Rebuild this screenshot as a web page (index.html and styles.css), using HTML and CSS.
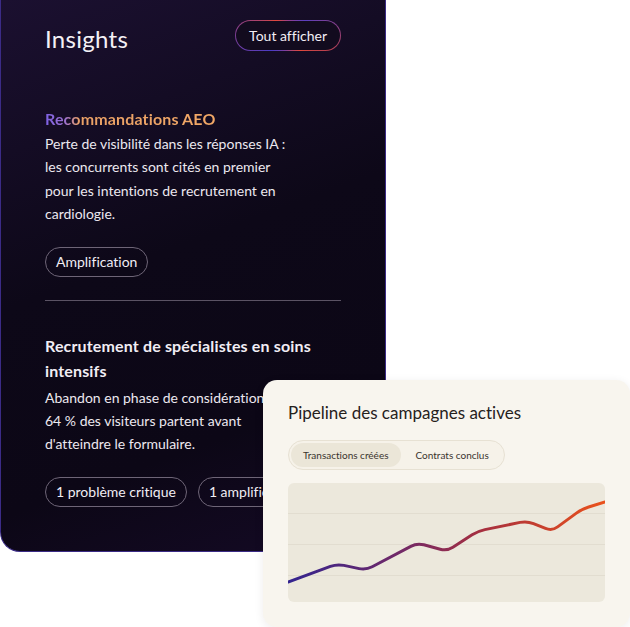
FILE: index.html
```html
<!DOCTYPE html>
<html lang="fr">
<head>
  <meta charset="UTF-8" />
  <title>Insights</title>
  <meta name="viewport" content="width=device-width, initial-scale=1" />
  <link rel="stylesheet" href="styles.css">
</head>
<body>
  <div class="stage">
    <section class="insights">
      <div class="insights-head">
        <h1>Insights</h1>
        <a href="#" class="btn-all">Tout afficher</a>
      </div>

      <div class="insight">
        <h3 class="grad-title">Recommandations AEO</h3>
        <p>Perte de visibilité dans les réponses IA :<br>les concurrents sont cités en premier<br>pour les intentions de recrutement en<br>cardiologie.</p>
        <div class="tags">
          <span class="tag">Amplification</span>
        </div>
      </div>

      <hr class="sep">

      <div class="insight second">
        <h3>Recrutement de spécialistes en soins intensifs</h3>
        <p>Abandon en phase de considération :<br>64 % des visiteurs partent avant<br>d'atteindre le formulaire.</p>
        <div class="tags">
          <span class="tag">1 problème critique</span>
          <span class="tag">1 amplification</span>
        </div>
      </div>
    </section>

    <!-- carte pipeline, posée par-dessus -->
    <section class="pipeline">
      <h2>Pipeline des campagnes actives</h2>
      <div class="tabs">
        <span class="tab active">Transactions créées</span>
        <span class="tab">Contrats conclus</span>
      </div>
      <div class="chart">
        <svg viewBox="0 0 317 119" preserveAspectRatio="none">
          <defs>
            <linearGradient id="lineGrad" gradientUnits="userSpaceOnUse" x1="0" y1="0" x2="317" y2="0">
              <stop offset="0" stop-color="#33248f"/>
              <stop offset="0.4" stop-color="#7a2a62"/>
              <stop offset="0.62" stop-color="#a8303e"/>
              <stop offset="1" stop-color="#ea521c"/>
            </linearGradient>
          </defs>
          <line x1="0" y1="30.5" x2="317" y2="30.5" class="grid"/>
          <line x1="0" y1="61.5" x2="317" y2="61.5" class="grid"/>
          <line x1="0" y1="92.5" x2="317" y2="92.5" class="grid"/>
          <path class="trend" d="M0 99 L42.4 83.4 Q49 81 55.9 82.4 L71.1 85.6 Q78 87 84.2 83.7 L122.8 63.3 Q129 60 135.8 61.8 L152.2 66.2 Q159 68 164.9 64.2 L184.1 51.8 Q190 48 196.9 46.6 L232.1 39.4 Q239 38 245.5 40.6 L257.5 45.4 Q264 48 269.6 43.9 L288.4 30.1 Q294 26 300.7 24 L317 19"/>
        </svg>
      </div>
    </section>
  </div>
</body>
</html>
```

FILE: styles.css
```css
body {
  margin: 0;
  background: #fff;
  font-family: Lato, 'Open Sans', sans-serif;
  font-variant-ligatures: none;
}
.stage {
  position: relative;
  width: 630px;
  height: 627px;
  overflow: hidden;
}
.insights {
  width: 386px;
  height: 552px;
  box-sizing: border-box;
  padding: 20px 44px 0 44px;
  background: linear-gradient(160deg, #1b1030 0%, #0d0818 45%, #0c0716 75%, #150a26 100%);
  border: 1px solid #3b2b86;
  border-top: none;
  border-radius: 0 0 20px 20px;
  color: #f1edf4;
}
.insights-head {
  display: flex;
  justify-content: space-between;
  align-items: center;
  height: 31px;
}
.insights-head h1 {
  margin: 0;
  padding-top: 6px;
  font-size: 24px;
  font-weight: 400;
  letter-spacing: 0.3px;
  color: #f4f1f6;
}
.btn-all {
  display: inline-flex;
  align-items: center;
  height: 31px;
  box-sizing: border-box;
  padding: 0 13px;
  border-radius: 16px;
  border: 1px solid transparent;
  background: linear-gradient(#120b1e, #120b1e) padding-box,
              conic-gradient(from 0deg, #9a3f8a 0deg, #5a3fc0 50deg, #b8404e 110deg, #e2483b 140deg, #8040a0 190deg, #4a3bc6 230deg, #8a3f8a 280deg, #e2483b 320deg, #9a3f8a 360deg) border-box;
  color: #f2eef5;
  font-size: 14px;
  text-decoration: none;
}
.insight {
  margin-top: 55px;
}
.insight h3 {
  margin: 0;
  font-size: 16px;
  font-weight: 700;
  line-height: 25px;
  letter-spacing: 0.15px;
}
.grad-title {
  background: linear-gradient(90deg, #7d62e4 0px, #9a6fd0 20px, #e9a066 34px, #f2a866 100%);
  -webkit-background-clip: text;
  background-clip: text;
  color: transparent;
  display: inline-block;
}
.insight p {
  margin: 1px 0 0;
  font-size: 14px;
  line-height: 23.4px;
  color: #ece8ef;
}
.tags {
  display: flex;
  gap: 11px;
  margin-top: 21px;
}
.tag {
  display: inline-flex;
  align-items: center;
  height: 30px;
  box-sizing: border-box;
  padding: 0 10px;
  border: 1px solid #6e6577;
  border-radius: 16px;
  font-size: 14px;
  color: #f1edf4;
  white-space: nowrap;
}
.sep {
  border: none;
  border-top: 1px solid #5b5364;
  margin: 23px 0 0;
}
.insight.second {
  margin-top: 32px;
}
.insight.second p {
  margin-top: 3px;
}
.insight.second .tags {
  margin-top: 21px;
}

/* carte claire */
.pipeline {
  position: absolute;
  left: 263px;
  top: 380px;
  width: 367px;
  height: 247px;
  box-sizing: border-box;
  padding: 22px 25px 0;
  background: #f8f5ee;
  border-radius: 14px;
  box-shadow: 0 2px 10px rgba(40, 30, 20, 0.08);
  color: #26211c;
}
.pipeline h2 {
  margin: 0;
  font-size: 17px;
  font-weight: 400;
  line-height: 22px;
}
.tabs {
  display: inline-flex;
  align-items: center;
  gap: 15px;
  margin-top: 16px;
  padding: 2px 15px 2px 2px;
  height: 30px;
  box-sizing: border-box;
  border: 1px solid #e7e1d3;
  border-radius: 15px;
  background: #f6f2e9;
}
.tab {
  font-size: 10px;
  color: #3a342e;
  line-height: 24px;
  border-radius: 12px;
}
.tab.active {
  background: #ebe6d8;
  padding: 0 12px;
}
.chart {
  margin-top: 13px;
  width: 317px;
  height: 119px;
  background: #ece8dc;
  border-radius: 6px;
  overflow: hidden;
}
.chart svg {
  display: block;
  width: 100%;
  height: 100%;
}
.grid {
  stroke: #e2ddd0;
  stroke-width: 1;
}
.trend {
  fill: none;
  stroke: url(#lineGrad);
  stroke-width: 3;
  stroke-linejoin: round;
  stroke-linecap: round;
}
```
